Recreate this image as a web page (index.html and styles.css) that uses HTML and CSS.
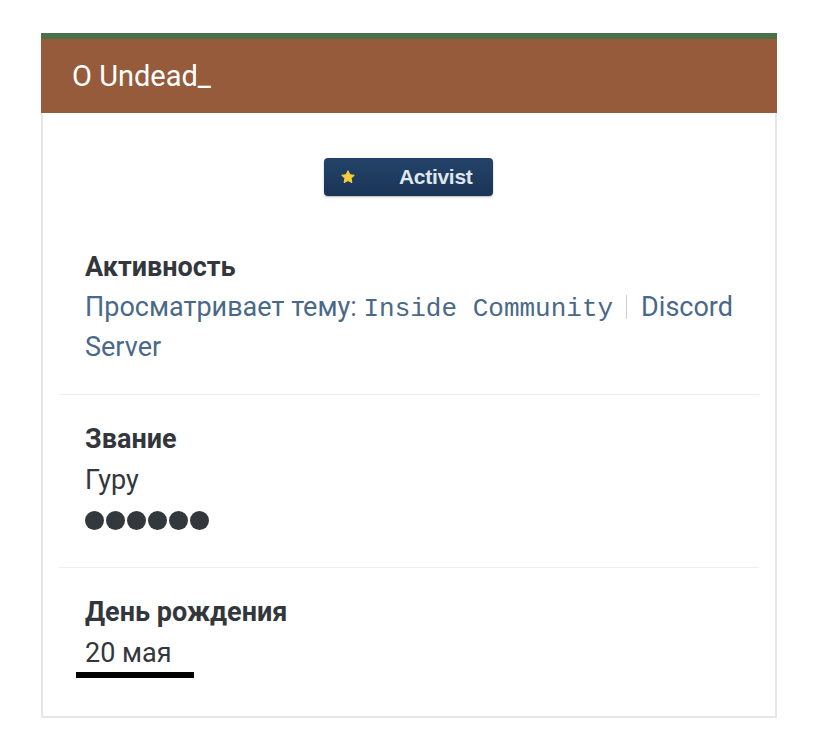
FILE: index.html
```
<!DOCTYPE html>
<html>
  <head>
    <title>О Undead_</title>
    <meta charset="UTF-8">
    <link rel="stylesheet" href="styles.css">
  </head>
  <body>
    <div class="page">
      <div class="card">
        <div class="card-head">O Undead_</div>
        <div class="card-body">
          <div class="badge-row">
            <span class="badge">
              <svg class="badge-star" width="16" height="16" viewBox="0 0 24 24"><path d="M12 2.5l2.9 6.1 6.6.8-4.9 4.6 1.3 6.6L12 17.3l-5.9 3.3 1.3-6.6-4.9-4.6 6.6-.8z" fill="#f6cf3a" stroke="#f6cf3a" stroke-width="1.5" stroke-linejoin="round"/></svg>
              <span class="badge-text">Activist</span>
            </span>
          </div>

          <div class="info">
            <div class="info-title">Активность</div>
            <div class="info-value link">Просматривает тему: <span class="mono">Inside Community</span><span class="sep"></span>Discord Server</div>
          </div>

          <div class="info">
            <div class="info-title">Звание</div>
            <div class="info-value">Гуру</div>
            <div class="dots">
              <span></span><span></span><span></span><span></span><span></span><span></span>
            </div>
          </div>

          <div class="info">
            <div class="info-title">День рождения</div>
            <div class="info-value">20 мая</div>
            <div class="scribble"></div>
          </div>
        </div>
      </div>
    </div>
  </body>
</html>
```

FILE: styles.css
```
body {
	margin: 0;
	background: #fff;
	font-family: Roboto, "Noto Sans", sans-serif;
}

.page {
	padding: 33px 40px 34px 41px;
}

.card {
	border: 2px solid #e4e6e8;
	border-top: 0;
	background: #fff;
}

.card-head {
	background: #955b3b;
	border-top: 6px solid #4b6f48;
	height: 74px;
	line-height: 74px;
	padding-left: 31px;
	color: #fff;
	font-size: 29px;
	margin: 0 -2px;
}

.card-body {
	padding: 45px 16px 0;
}

.badge-row {
	display: flex;
	justify-content: center;
	padding-right: 1px;
}

.badge {
	display: flex;
	align-items: center;
	width: 169px;
	height: 38px;
	box-sizing: border-box;
	padding-left: 16px;
	background: linear-gradient(#24436a, #1a3455);
	border-radius: 4px;
	box-shadow: 0 1px 2px rgba(0, 0, 0, 0.3);
}

.badge-text {
	margin-left: 43px;
	color: #dfe6ee;
	font-family: "Liberation Sans", Arial, sans-serif;
	font-weight: bold;
	font-size: 21px;
	letter-spacing: -0.3px;
}

.info {
	padding: 51px 26px 27px;
	border-bottom: 1px solid #eceeef;
}

.info + .info {
	padding-top: 24px;
}

.info:last-child {
	border-bottom: 0;
	padding-bottom: 38px;
}

.info-title {
	font-size: 27px;
	font-weight: bold;
	color: #33373b;
	line-height: 40px;
	margin-bottom: 1px;
}

.info-value {
	font-size: 27px;
	color: #33373b;
	line-height: 40px;
}

.info-value.link {
	color: #4a6987;
	margin-top: -1px;
}

.mono {
	font-family: "Liberation Mono", "Courier New", monospace;
	font-size: 26px;
	line-height: 0;
}

.sep {
	display: inline-block;
	width: 1px;
	height: 24px;
	background: #c9ccd0;
	margin: 0 14px 0 13px;
	vertical-align: -3px;
}

.dots {
	display: flex;
	gap: 2px;
	height: 40px;
	align-items: center;
}

.dots span {
	width: 19px;
	height: 19px;
	border-radius: 50%;
	background: #33383d;
}

.scribble {
	width: 118px;
	height: 6px;
	background: #000;
	margin: -1px 0 0 -9px;
}
```
